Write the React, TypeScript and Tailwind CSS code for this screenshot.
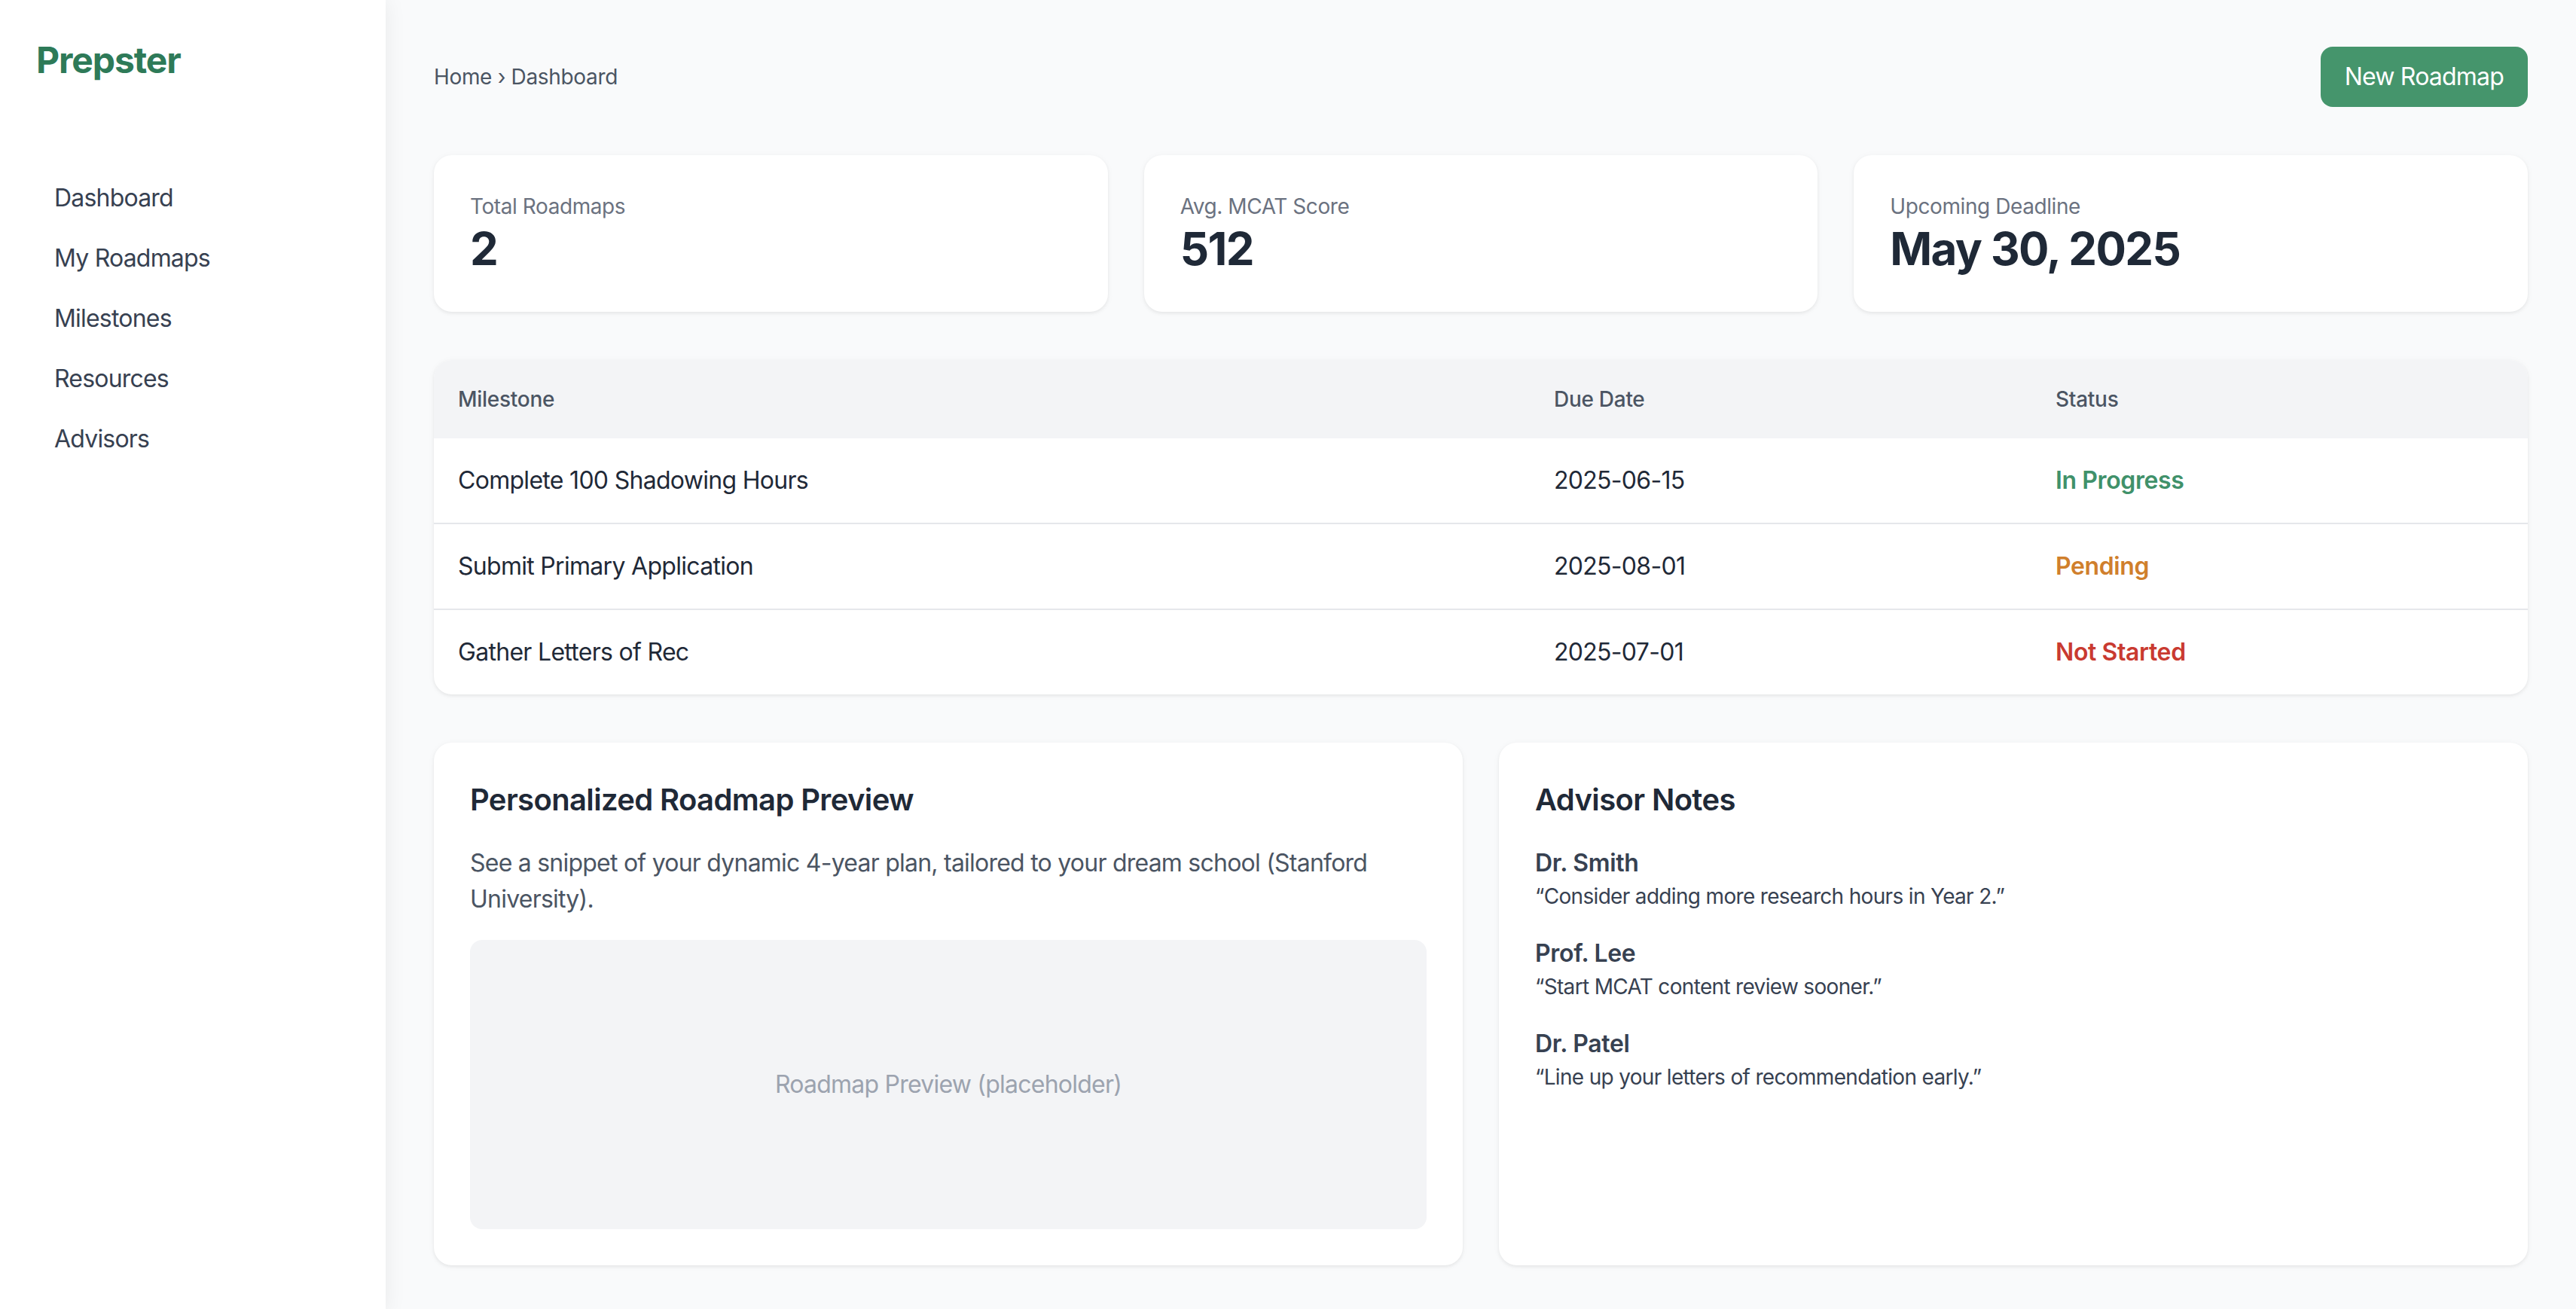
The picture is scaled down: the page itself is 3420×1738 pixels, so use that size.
import React from "react";

type Status = "In Progress" | "Pending" | "Not Started";

interface Milestone {
  name: string;
  due: string;
  status: Status;
}

const navItems = ["Dashboard", "My Roadmaps", "Milestones", "Resources", "Advisors"];

const stats = [
  { label: "Total Roadmaps", value: "2" },
  { label: "Avg. MCAT Score", value: "512" },
  { label: "Upcoming Deadline", value: "May 30, 2025" },
];

const milestones: Milestone[] = [
  { name: "Complete 100 Shadowing Hours", due: "2025-06-15", status: "In Progress" },
  { name: "Submit Primary Application", due: "2025-08-01", status: "Pending" },
  { name: "Gather Letters of Rec", due: "2025-07-01", status: "Not Started" },
];

const notes = [
  { who: "Dr. Smith", text: "\u201CConsider adding more research hours in Year 2.\u201D" },
  { who: "Prof. Lee", text: "\u201CStart MCAT content review sooner.\u201D" },
  { who: "Dr. Patel", text: "\u201CLine up your letters of recommendation early.\u201D" },
];

const statusColor: Record<Status, string> = {
  "In Progress": "text-[#40916a]",
  Pending: "text-[#d07f2c]",
  "Not Started": "text-[#c93a30]",
};

const cardShadow = "shadow-[0_2px_4px_rgba(0,0,0,0.06),0_1px_10px_rgba(0,0,0,0.04)]";

export default function App() {
  return (
    <div className="flex min-h-screen bg-[#f9fafb] font-['Inter','Liberation_Sans',sans-serif] text-[#1f2937]">
      {/* Sidebar */}
      <aside className="relative z-10 w-[512px] shrink-0 bg-white p-12 shadow-[0_0_28px_rgba(0,0,0,0.07)]">
        <div className="text-[48px] leading-[64px] font-bold tracking-[-0.023em] text-[#2e7a58]">Prepster</div>
        <nav className="mt-[111px] flex flex-col">
          {navItems.map((item) => (
            <a
              key={item}
              href="#"
              className="rounded-2xl px-6 py-4 text-[32px] leading-[48px] tracking-[-0.025em] text-[#374151] hover:bg-gray-100"
            >
              {item}
            </a>
          ))}
        </nav>
      </aside>

      {/* Main */}
      <main className="flex-1 px-16 pt-[62px] pb-16">
        <div className="mb-16 flex h-20 items-center justify-between">
          <div className="text-[28px] leading-10 tracking-[-0.012em] text-[#4b5563]">Home › Dashboard</div>
          <button className="rounded-2xl bg-[#45956c] px-8 py-4 text-[32px] leading-[48px] tracking-[-0.025em] text-white">
            New Roadmap
          </button>
        </div>

        <div className="mb-16 grid grid-cols-3 gap-12">
          {stats.map((s) => (
            <div key={s.label} className={`rounded-3xl bg-white p-12 ${cardShadow}`}>
              <div className="text-[28px] leading-10 tracking-[-0.015em] text-[#6b7280]">{s.label}</div>
              <div className="text-[60px] leading-[72px] font-bold tracking-[-0.027em] text-[#1f2937]">{s.value}</div>
            </div>
          ))}
        </div>

        <div className={`mb-16 overflow-hidden rounded-3xl bg-white ${cardShadow}`}>
          <table className="w-full table-fixed border-collapse text-left">
            <thead className="bg-[#f3f4f6]">
              <tr>
                <th className="w-[1455px] px-8 py-8 text-[28px] leading-10 font-medium tracking-[-0.01em] text-[#4b5563]">
                  Milestone
                </th>
                <th className="w-[666px] px-8 py-8 text-[28px] leading-10 font-medium tracking-[-0.01em] text-[#4b5563]">
                  Due Date
                </th>
                <th className="px-8 py-8 text-[28px] leading-10 font-medium tracking-[-0.01em] text-[#4b5563]">Status</th>
              </tr>
            </thead>
            <tbody className="divide-y-2 divide-[#e5e7eb]">
              {milestones.map((m) => (
                <tr key={m.name}>
                  <td className="px-8 py-8 text-[32px] leading-[48px] tracking-[-0.022em] text-[#1f2937]">{m.name}</td>
                  <td className="px-8 py-8 text-[32px] leading-[48px] tracking-[-0.022em] text-[#1f2937]">{m.due}</td>
                  <td
                    className={`px-8 py-8 text-[32px] leading-[48px] font-semibold tracking-[-0.012em] ${statusColor[m.status]}`}
                  >
                    {m.status}
                  </td>
                </tr>
              ))}
            </tbody>
          </table>
        </div>

        <div className="grid grid-cols-2 gap-12">
          <section className={`rounded-3xl bg-white p-12 ${cardShadow}`}>
            <h2 className="mb-8 text-[40px] leading-[56px] font-semibold tracking-[-0.016em] text-[#1f2937]">
              Personalized Roadmap Preview
            </h2>
            <p className="text-[32px] leading-[48px] tracking-[-0.024em] text-[#4b5563]">
              See a snippet of your dynamic 4-year plan, tailored to your dream school (Stanford University).
            </p>
            <div className="mt-[30px] flex h-[384px] items-center justify-center rounded-2xl bg-[#f3f4f6] text-[32px] leading-[48px] tracking-[-0.024em] text-[#9ca3af]">
              Roadmap Preview (placeholder)
            </div>
          </section>

          <section className={`rounded-3xl bg-white p-12 ${cardShadow}`}>
            <h2 className="mb-8 text-[40px] leading-[56px] font-semibold tracking-[-0.016em] text-[#1f2937]">
              Advisor Notes
            </h2>
            <div className="flex flex-col gap-8">
              {notes.map((n) => (
                <div key={n.who}>
                  <div className="text-[32px] leading-[48px] font-semibold tracking-[-0.01em] text-[#374151]">{n.who}</div>
                  <div className="text-[28px] leading-10 tracking-[-0.024em] text-[#374151]">{n.text}</div>
                </div>
              ))}
            </div>
          </section>
        </div>
      </main>
    </div>
  );
}
